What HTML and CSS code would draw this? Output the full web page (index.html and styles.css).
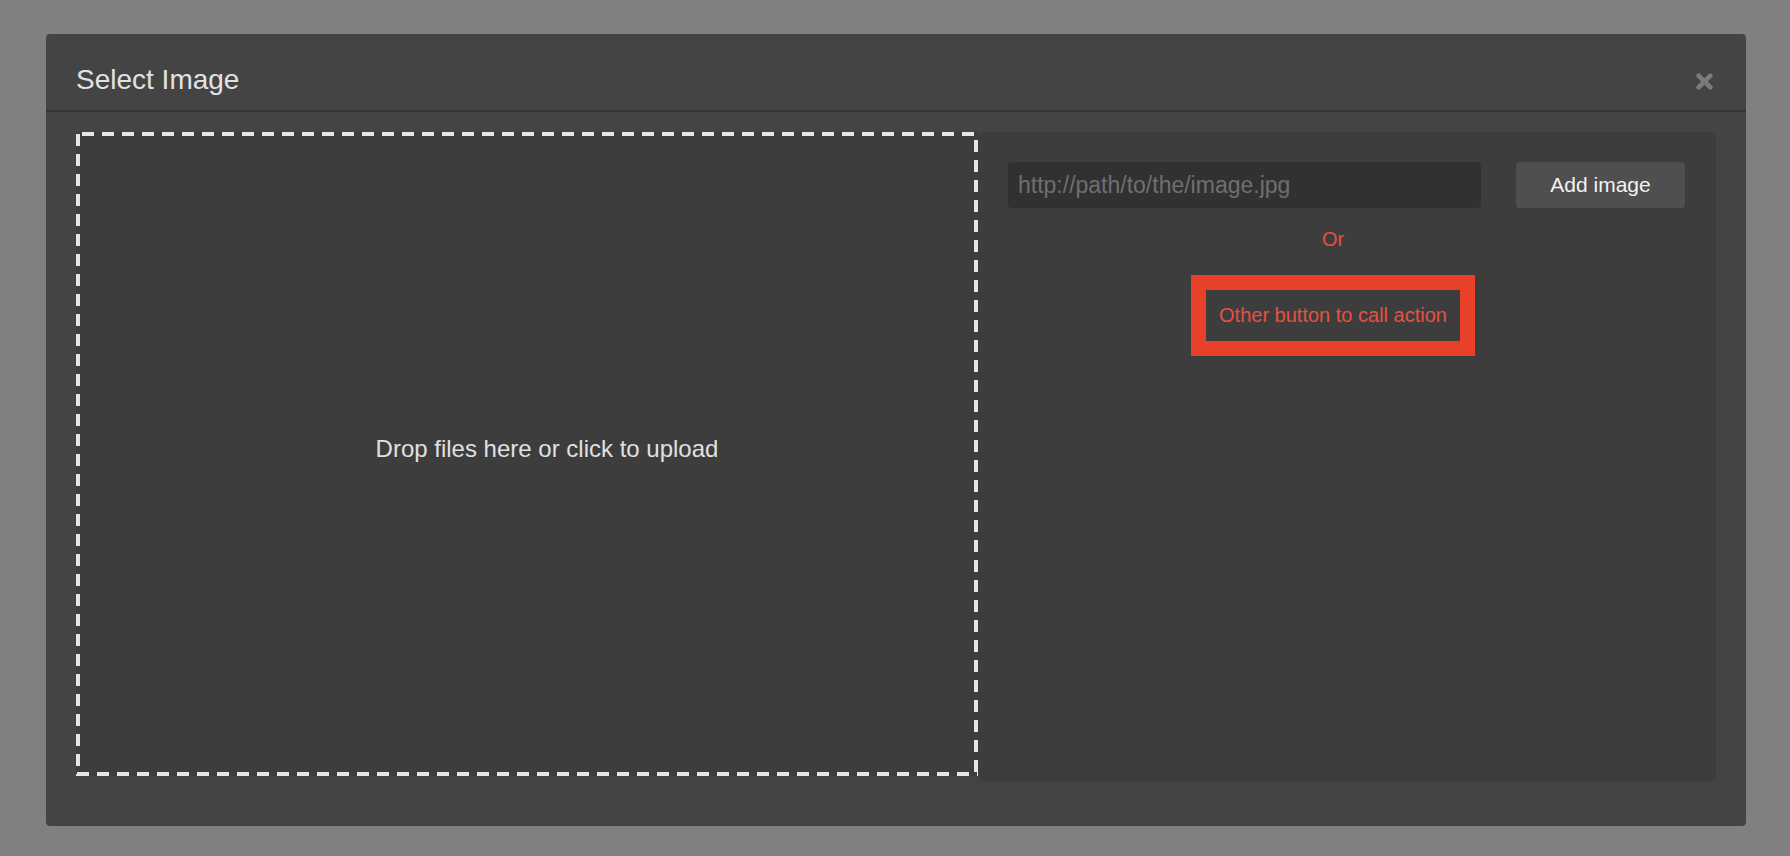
FILE: index.html
```html
<!DOCTYPE html>
<html lang="en">
<head>
<meta charset="utf-8">
<title>Select Image</title>
<link rel="stylesheet" href="styles.css">
</head>
<body>
  <div class="modal">
    <div class="modal-header">
      <h1 class="modal-title">Select Image</h1>
      <button class="close" aria-label="Close">
        <svg width="17" height="17" viewBox="0 0 17 17" aria-hidden="true">
          <path d="M2.6 2.6 L14.4 14.4 M14.4 2.6 L2.6 14.4" stroke="#7b7b7b" stroke-width="4.6" stroke-linecap="round" fill="none"/>
        </svg>
      </button>
    </div>
    <div class="modal-body">
      <div class="dropzone">
        <span class="dropzone-text">Drop files here or click to upload</span>
      </div>
      <div class="side">
        <div class="url-row">
          <input class="url-input" type="text" placeholder="http://path/to/the/image.jpg">
          <button class="add-btn">Add image</button>
        </div>
        <div class="alt">
          <div class="or">Or</div>
          <button class="other-btn">Other button to call action</button>
        </div>
      </div>
    </div>
  </div>
</body>
</html>
```

FILE: styles.css
```css
html, body {
  margin: 0;
  padding: 0;
}

body {
  background: #808080;
  font-family: "Liberation Sans", Arial, Helvetica, sans-serif;
  padding: 34px 0 0 46px;
  min-height: 856px;
  box-sizing: border-box;
}

.modal {
  width: 1700px;
  background: #444444;
  border-radius: 4px;
}

.modal-header {
  display: flex;
  align-items: center;
  justify-content: space-between;
  padding: 30px 33px 14px 30px;
  border-bottom: 2px solid #363636;
}

.modal-title {
  margin: 0;
  font-size: 28px;
  line-height: 32px;
  font-weight: normal;
  color: #e2e2e2;
}

.close {
  display: block;
  width: 17px;
  height: 17px;
  padding: 0;
  margin: 2px 0 0 0;
  border: none;
  background: transparent;
  cursor: pointer;
}

.close svg {
  display: block;
}

.modal-body {
  display: flex;
  align-items: flex-start;
  padding: 20px 30px 44px 30px;
}

.dropzone {
  box-sizing: border-box;
  width: 902px;
  height: 644px;
  flex: none;
  background:
    linear-gradient(to right, #e6e6e6 12px, transparent 12px) 6px 0 / 20px 4px repeat-x,
    linear-gradient(to right, #e6e6e6 12px, transparent 12px) 1px 100% / 20px 4px repeat-x,
    linear-gradient(to bottom, #e6e6e6 12px, transparent 12px) 0 2px / 4px 20px repeat-y,
    linear-gradient(to bottom, #e6e6e6 12px, transparent 12px) 100% 8px / 4px 20px repeat-y,
    #3d3d3d;
  display: flex;
  align-items: center;
  justify-content: center;
  padding: 0 0 10px 40px;
}

.dropzone-text {
  font-size: 24px;
  line-height: 28px;
  color: #e0e0e0;
}

.side {
  flex: 1;
  box-sizing: border-box;
  height: 650px;
  background: #3d3d3d;
  border-radius: 6px;
  padding: 30px 31px 30px 30px;
}

.url-row {
  display: flex;
  gap: 35px;
}

.url-input {
  box-sizing: border-box;
  width: 473px;
  height: 46px;
  border: none;
  border-radius: 4px;
  background: #313131;
  padding: 0 10px;
  font-family: "Liberation Sans", Arial, Helvetica, sans-serif;
  font-size: 23px;
  color: #d0d0d0;
  outline: none;
}

.url-input::placeholder {
  color: #6f6f6f;
}

.add-btn {
  box-sizing: border-box;
  width: 169px;
  height: 46px;
  border: none;
  border-radius: 4px;
  background: #4f4f4f;
  color: #f2f2f2;
  font-family: "Liberation Sans", Arial, Helvetica, sans-serif;
  font-size: 21px;
  padding: 0;
  cursor: pointer;
}

.alt {
  padding-right: 27px;
  text-align: center;
}

.or {
  margin-top: 20px;
  font-size: 20px;
  line-height: 23px;
  color: #e8503d;
}

.other-btn {
  display: inline-block;
  margin-top: 24px;
  border: 15px solid #e9402a;
  background: #3d3d3d;
  padding: 14px 13px;
  font-family: "Liberation Sans", Arial, Helvetica, sans-serif;
  font-size: 20px;
  line-height: 23px;
  color: #e8503d;
  cursor: pointer;
}
```
